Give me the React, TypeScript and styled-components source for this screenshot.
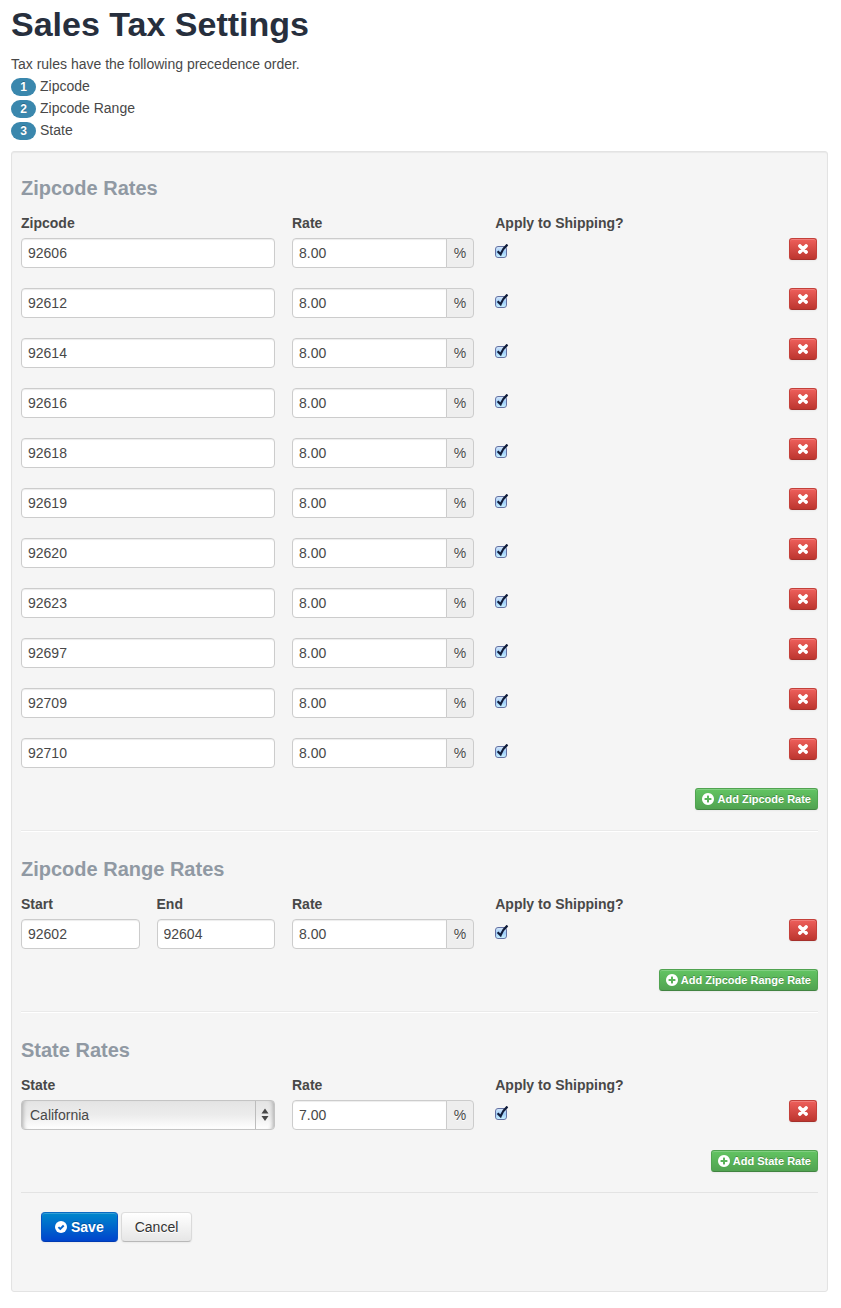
import React, { useState } from "react";
import styled, { createGlobalStyle, css } from "styled-components";

const GlobalStyle = createGlobalStyle`
  * {
    box-sizing: border-box;
  }
  body {
    margin: 0;
    background: #fff;
    color: #484848;
    font-family: "Liberation Sans", Arial, sans-serif;
    font-size: 14px;
    line-height: 20px;
  }
`;

const Page = styled.main`
  padding: 4px 13px 16px 11px;
`;

const Title = styled.h1`
  margin: 0 0 9px;
  color: #272f3d;
  font-size: 34px;
  line-height: 40px;
`;

const Intro = styled.p`
  margin: 0;
  line-height: 22px;
`;

const Precedence = styled.ol`
  margin: 0 0 10px;
  padding: 0;
  list-style: none;
`;

const PrecedenceItem = styled.li`
  display: flex;
  gap: 4px;
  line-height: 22px;
`;

const Badge = styled.span`
  width: 25px;
  height: 18px;
  margin-top: 3px;
  border-radius: 9px;
  background: #3a87ad;
  color: #fff;
  font-size: 12px;
  font-weight: bold;
  line-height: 18px;
  text-align: center;
  text-shadow: 0 -1px 0 rgba(0, 0, 0, 0.25);
`;

const Panel = styled.form`
  padding: 9px;
  border: 1px solid #e3e3e3;
  border-radius: 3px;
  background: #f5f5f5;
  box-shadow: inset 0 1px 1px rgba(0, 0, 0, 0.05);
`;

const Section = styled.section`
  padding-top: 12px;
`;

const SectionTitle = styled.h2`
  margin: 0 0 10px;
  color: #9099a3;
  font-size: 20px;
  line-height: 30px;
`;

const Divider = styled.hr`
  height: 2px;
  margin: 20px 0 10px;
  border: 0;
  border-top: 1px solid #eaeaea;
  border-bottom: 1px solid #fff;
`;

const Columns = styled.div`
  display: grid;
  grid-template-columns: repeat(12, minmax(0, 1fr));
  column-gap: 17px;
  padding-right: 1px;
`;

const LabelRow = styled(Columns)`
  margin-bottom: 5px;
  font-weight: bold;
`;

const RateRow = styled(Columns)`
  align-items: start;
  margin-bottom: 20px;
`;

const Cell = styled.div<{ $span: number }>`
  grid-column: span ${(p) => p.$span};
`;

const ColumnLabel = styled.label<{ $span: number }>`
  grid-column: span ${(p) => p.$span};
`;

const fieldText = css`
  color: #484848;
  font-family: inherit;
  font-size: 14px;
  line-height: 20px;
`;

const TextField = styled.input`
  ${fieldText}
  display: block;
  width: 100%;
  height: 30px;
  padding: 4px 6px;
  border: 1px solid #ccc;
  border-radius: 4px;
  background: #fff;
  box-shadow: inset 0 1px 1px rgba(0, 0, 0, 0.075);
`;

const RateGroup = styled.div`
  display: flex;
  width: 182px;
  max-width: 100%;

  ${TextField} {
    flex: 1;
    min-width: 0;
    border-radius: 4px 0 0 4px;
  }
`;

const Unit = styled.span`
  width: 28px;
  height: 30px;
  margin-left: -1px;
  padding: 4px 0;
  border: 1px solid #ccc;
  border-radius: 0 4px 4px 0;
  background: #eee;
  text-align: center;
  text-shadow: 0 1px 0 #fff;
`;

const CheckWrap = styled.span`
  display: block;
  position: relative;
  width: 12px;
  height: 12px;
  margin-top: 8px;

  svg {
    position: absolute;
    left: 0;
    bottom: 0;
    pointer-events: none;
  }
`;

const Tick = styled.input`
  appearance: none;
  display: block;
  width: 12px;
  height: 12px;
  margin: 0;
  border: 1px solid #6472a4;
  border-radius: 3px;
  background: linear-gradient(#d3e6fa, #9fcdf8 50%, #c8f0ff);

  &:not(:checked) {
    background: #fff;
  }
  &:not(:checked) + svg {
    display: none;
  }
`;

const SelectWrap = styled.div`
  position: relative;

  svg {
    position: absolute;
    top: 0;
    right: 0;
    pointer-events: none;
  }
`;

const StateSelect = styled.select`
  ${fieldText}
  appearance: none;
  display: block;
  width: 100%;
  height: 30px;
  padding: 4px 24px 4px 8px;
  border: 1px solid #c4c4c4;
  border-radius: 4px;
  background: linear-gradient(#e4e4e4, #ececec 50%, #fff);
  box-shadow: inset 5px 0 4px -4px #a8a8a8, inset -5px 0 4px -4px #a8a8a8;
`;

const buttonBase = css`
  display: flex;
  align-items: center;
  justify-content: center;
  border: 1px solid;
  cursor: pointer;
  font-family: inherit;
  white-space: nowrap;
  box-shadow: inset 0 1px 0 rgba(255, 255, 255, 0.2), 0 1px 2px rgba(0, 0, 0, 0.05);
`;

const smallButton = css`
  ${buttonBase}
  height: 22px;
  border-radius: 3px;
  color: #fff;
  text-shadow: 0 -1px 0 rgba(0, 0, 0, 0.25);
`;

const RemoveButton = styled.button`
  ${smallButton}
  width: 28px;
  margin-left: auto;
  padding: 0;
  border-color: #c4403a #c4403a #a5302b;
  background: linear-gradient(#ee5f5b, #bd362f);
`;

const AddButton = styled.button`
  ${smallButton}
  gap: 3px;
  margin-left: auto;
  padding: 0 6px;
  border-color: #51a351 #51a351 #418441;
  background: linear-gradient(#62c462, #51a351);
  font-size: 11px;
  font-weight: bold;
  line-height: 16px;
`;

const Actions = styled.div`
  display: flex;
  gap: 3px;
  margin-top: 20px;
  padding: 19px 20px 40px;
  border-top: 1px solid #e3e3e3;
`;

const ActionButton = styled.button<{ $primary?: boolean }>`
  ${buttonBase}
  gap: 4px;
  height: 30px;
  padding: 0 13px;
  border-radius: 4px;
  font-size: 14px;
  line-height: 20px;
  ${(p) =>
    p.$primary
      ? css`
          border-color: #0a6bc4 #0a55c4 #003ab3;
          background: linear-gradient(#0088cc, #0044cc);
          color: #fff;
          font-weight: bold;
          text-shadow: 0 -1px 0 rgba(0, 0, 0, 0.25);
        `
      : css`
          border-color: #dedede #dadada #b8b8b8;
          background: linear-gradient(#fff, #e6e6e6);
          color: #333;
          text-shadow: 0 1px 0 #fff;
        `}
`;

const DISC =
  "m320-64q0 209-103 385.5t-279.5 279.5-385.5 103-385.5-103-279.5-279.5-103-385.5 103-385.5 279.5-279.5 385.5-103 385.5 103 279.5 279.5 103 385.5z";

const RemoveIcon = () => (
  <svg width="10" height="10" viewBox="0 0 10 10" aria-hidden="true">
    <path
      d="M1.9 1.9L8.1 8.1M8.1 1.9L1.9 8.1"
      stroke="#fff"
      strokeWidth="3.6"
      strokeLinecap="round"
    />
  </svg>
);

const PlusIcon = () => (
  <svg width="12" height="12" viewBox="128 128 1536 1536" fill="#fff" aria-hidden="true">
    <path
      d={
        "M1344 960v-128q0-26-19-45t-45-19h-256v-256q0-26-19-45t-45-19h-128q-26 0-45 19t-19 45v256h-256q-26 0-45 19t-19 45v128q0 26 19 45t45 19h256v256q0 26 19 45t45 19h128q26 0 45-19t19-45v-256h256q26 0 45-19t19-45z" +
        DISC
      }
    />
  </svg>
);

const SavedIcon = () => (
  <svg width="12" height="12" viewBox="0 0 12 12" aria-hidden="true">
    <circle cx="6" cy="6" r="6" fill="#fff" />
    <path d="M3.4 6.1l1.9 1.9 3.4-3.5" fill="none" stroke="#0766cc" strokeWidth="1.9" />
  </svg>
);

const CheckMark = () => (
  <svg width="14" height="14" viewBox="0 0 14 14" aria-hidden="true">
    <path
      d="M2.6 7.2L5.6 10.2C7 6.6 9 3.4 12.5 0.6"
      fill="none"
      stroke="#101c3a"
      strokeWidth="2.3"
    />
  </svg>
);

const SelectArrows = () => (
  <svg width="20" height="30" viewBox="0 0 20 30" aria-hidden="true">
    <path d="M0.5 1v28" stroke="#bdbdbd" />
    <path d="M6.5 13.5l3.5-5 3.5 5zM6.5 16l3.5 5 3.5-5z" fill="#484848" />
  </svg>
);

type RateFieldsProps = { section: string; index: number; rate: string };

function RateFields({ section, index, rate }: RateFieldsProps) {
  return (
    <>
      <Cell $span={3}>
        <RateGroup>
          <TextField
            id={`${section}-rate-${index}`}
            aria-labelledby={`${section}-rate-label`}
            defaultValue={rate}
          />
          <Unit>%</Unit>
        </RateGroup>
      </Cell>
      <Cell $span={4}>
        <CheckWrap>
          <Tick
            type="checkbox"
            id={`${section}-shipping-${index}`}
            aria-labelledby={`${section}-shipping-label`}
            defaultChecked
          />
          <CheckMark />
        </CheckWrap>
      </Cell>
    </>
  );
}

function RateLabels({ section }: { section: string }) {
  return (
    <>
      <ColumnLabel $span={3} id={`${section}-rate-label`} htmlFor={`${section}-rate-0`}>
        Rate
      </ColumnLabel>
      <ColumnLabel $span={4} id={`${section}-shipping-label`} htmlFor={`${section}-shipping-0`}>
        Apply to Shipping?
      </ColumnLabel>
    </>
  );
}

function Remove({ onClick }: { onClick: () => void }) {
  return (
    <Cell $span={1}>
      <RemoveButton type="button" aria-label="Remove rate" onClick={onClick}>
        <RemoveIcon />
      </RemoveButton>
    </Cell>
  );
}

function useRows<T>(initial: T[], blank: T) {
  const [rows, setRows] = useState(initial.map((value, key) => ({ key, value })));
  return {
    rows,
    add: () =>
      setRows((all) => [...all, { key: Math.max(-1, ...all.map((r) => r.key)) + 1, value: blank }]),
    remove: (key: number) => setRows((all) => all.filter((r) => r.key !== key)),
  };
}

const ZIPCODES = [
  "92606", "92612", "92614", "92616", "92618", "92619",
  "92620", "92623", "92697", "92709", "92710",
];

export default function App() {
  const zips = useRows(ZIPCODES.map((zip) => ({ zip, rate: "8.00" })), { zip: "", rate: "" });
  const ranges = useRows([{ start: "92602", end: "92604", rate: "8.00" }], {
    start: "",
    end: "",
    rate: "",
  });
  const states = useRows([{ state: "California", rate: "7.00" }], {
    state: "California",
    rate: "",
  });

  return (
    <>
      <GlobalStyle />
      <Page>
        <Title>Sales Tax Settings</Title>
        <Intro>Tax rules have the following precedence order.</Intro>
        <Precedence>
          {["Zipcode", "Zipcode Range", "State"].map((name, i) => (
            <PrecedenceItem key={name}>
              <Badge>{i + 1}</Badge>
              {name}
            </PrecedenceItem>
          ))}
        </Precedence>

        <Panel onSubmit={(e: React.FormEvent) => e.preventDefault()}>
          <Section>
            <SectionTitle>Zipcode Rates</SectionTitle>
            <LabelRow>
              <ColumnLabel $span={4} id="zip-label" htmlFor="zip-0">
                Zipcode
              </ColumnLabel>
              <RateLabels section="zip" />
            </LabelRow>
            {zips.rows.map(({ key, value }) => (
              <RateRow key={key}>
                <Cell $span={4}>
                  <TextField id={`zip-${key}`} aria-labelledby="zip-label" defaultValue={value.zip} />
                </Cell>
                <RateFields section="zip" index={key} rate={value.rate} />
                <Remove onClick={() => zips.remove(key)} />
              </RateRow>
            ))}
            <AddButton type="button" onClick={zips.add}>
              <PlusIcon />
              Add Zipcode Rate
            </AddButton>
          </Section>

          <Divider />

          <Section>
            <SectionTitle>Zipcode Range Rates</SectionTitle>
            <LabelRow>
              <ColumnLabel $span={2} id="start-label" htmlFor="start-0">
                Start
              </ColumnLabel>
              <ColumnLabel $span={2} id="end-label" htmlFor="end-0">
                End
              </ColumnLabel>
              <RateLabels section="range" />
            </LabelRow>
            {ranges.rows.map(({ key, value }) => (
              <RateRow key={key}>
                <Cell $span={2}>
                  <TextField id={`start-${key}`} aria-labelledby="start-label" defaultValue={value.start} />
                </Cell>
                <Cell $span={2}>
                  <TextField id={`end-${key}`} aria-labelledby="end-label" defaultValue={value.end} />
                </Cell>
                <RateFields section="range" index={key} rate={value.rate} />
                <Remove onClick={() => ranges.remove(key)} />
              </RateRow>
            ))}
            <AddButton type="button" onClick={ranges.add}>
              <PlusIcon />
              Add Zipcode Range Rate
            </AddButton>
          </Section>

          <Divider />

          <Section>
            <SectionTitle>State Rates</SectionTitle>
            <LabelRow>
              <ColumnLabel $span={4} id="state-label" htmlFor="state-0">
                State
              </ColumnLabel>
              <RateLabels section="state" />
            </LabelRow>
            {states.rows.map(({ key, value }) => (
              <RateRow key={key}>
                <Cell $span={4}>
                  <SelectWrap>
                    <StateSelect id={`state-${key}`} aria-labelledby="state-label" defaultValue={value.state}>
                      <option>California</option>
                    </StateSelect>
                    <SelectArrows />
                  </SelectWrap>
                </Cell>
                <RateFields section="state" index={key} rate={value.rate} />
                <Remove onClick={() => states.remove(key)} />
              </RateRow>
            ))}
            <AddButton type="button" onClick={states.add}>
              <PlusIcon />
              Add State Rate
            </AddButton>
          </Section>

          <Actions>
            <ActionButton type="submit" $primary>
              <SavedIcon />
              Save
            </ActionButton>
            <ActionButton type="button">Cancel</ActionButton>
          </Actions>
        </Panel>
      </Page>
    </>
  );
}
